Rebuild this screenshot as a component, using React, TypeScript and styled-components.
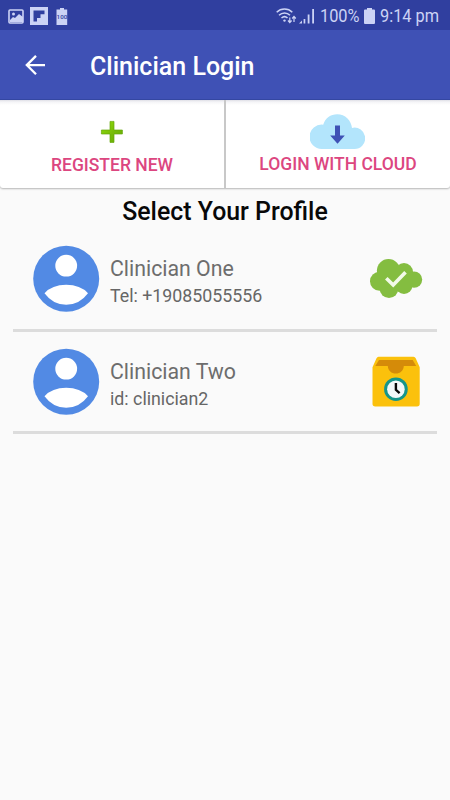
import React from "react";
import styled, { createGlobalStyle } from "styled-components";

const GlobalStyle = createGlobalStyle`
  * { box-sizing: border-box; }
  body { margin: 0; background: #fafafa; font-family: Roboto, "Liberation Sans", sans-serif; }
  svg { display: block; flex: none; }
`;

const Screen = styled.main`
  width: 450px;
  height: 800px;
  overflow: hidden;
  background: #fafafa;
`;

const StatusBar = styled.div`
  height: 30px;
  background: #303f9f;
  display: flex;
  align-items: center;
  justify-content: space-between;
  padding: 2px 10px 0 8px;
  color: #ccd3f5;
`;

const StatusGroup = styled.div`
  display: flex;
  align-items: center;
`;

const LeftIcons = styled(StatusGroup)`
  gap: 6px;
  svg:last-child { margin-left: 2px; }
`;

const RightIcons = styled(StatusGroup)`
  gap: 5px;
  svg:first-child { margin-right: -3px; }
`;

const StatusText = styled.span<{ $width: number }>`
  width: ${(p) => p.$width}px;
  font-size: 19px;
  line-height: 24px;
  white-space: nowrap;
  transform: scaleX(0.86);
  transform-origin: left;
`;

const AppBar = styled.header`
  height: 70px;
  background: #3f51b5;
  border-bottom: 1px solid #3548a4;
  display: flex;
  align-items: center;
  padding: 3px 0 0 25px;
  gap: 44px;
  color: #fff;
`;

const AppTitle = styled.h1`
  margin: 2px 0 0;
  font-size: 25px;
  font-weight: 500;
  line-height: 32px;
  white-space: nowrap;
`;

const Actions = styled.nav`
  height: 87.5px;
  display: grid;
  grid-template-columns: 224px 2px 224px;
  background: #c8c8c8;
  border-radius: 0 0 3px 3px;
  box-shadow: 0 1px 2px rgba(0, 0, 0, 0.28);
`;

const Action = styled.button<{ $top: number; $gap: number; $side: "left" | "right" }>`
  border: 0;
  padding: ${(p) => p.$top}px 0 0;
  display: flex;
  flex-direction: column;
  align-items: center;
  gap: ${(p) => p.$gap}px;
  background: linear-gradient(#dfdfe6 0, #f5f5f7 2px, #fff 5px);
  border-radius: ${(p) => (p.$side === "left" ? "0 0 0 3px" : "0 0 3px 0")};
  font-family: inherit;
  color: #dc4680;
`;

const ActionIcon = styled.span<{ $shift: number }>`
  margin-right: ${(p) => p.$shift}px;
`;

const ActionLabel = styled.span`
  font-size: 17.5px;
  font-weight: 500;
  line-height: 22px;
  white-space: nowrap;
`;

const Heading = styled.h2`
  margin: 8.5px 0 16px;
  text-align: center;
  font-size: 24.9px;
  font-weight: 500;
  line-height: 32px;
  color: #080808;
`;

const ProfileList = styled.ul`
  margin: 0 13px;
  padding: 0;
  list-style: none;
`;

const ProfileItem = styled.li`
  height: 102.5px;
`;

const ProfileRow = styled.div`
  height: 84.5px;
  display: flex;
  align-items: flex-start;
  padding: 1px 14px 0 19px;
`;

const Rule = styled.hr`
  margin: 0;
  border: 0;
  height: 3px;
  background: #dcdcdc;
`;

const Details = styled.div`
  flex: 1;
  padding: 10px 0 0 10px;
  color: #666;
`;

const Name = styled.div`
  font-size: 21.3px;
  line-height: 27px;
  color: #6d6d6d;
`;

const Contact = styled.div`
  padding-top: 1px;
  font-size: 17.8px;
  line-height: 25px;
`;

const PictureIcon = () => (
  <svg width="16" height="15" viewBox="0 0 16 15">
    <rect x="1" y="1" width="14" height="13" rx="1" fill="none" stroke="currentColor" strokeWidth="1.6" />
    <circle cx="5.5" cy="5" r="1.5" fill="currentColor" />
    <path d="M2 11l3-3 2 1 4-4 4 3v5H2z" fill="currentColor" />
  </svg>
);

const FlipIcon = () => (
  <svg width="18" height="18" viewBox="0 0 18 18">
    <path fill="currentColor" fillRule="evenodd" d="M0 0h18v18H0zM3.5 3.5v11H7V11h3.5V7.2h4V3.5z" />
  </svg>
);

const BadgeBatteryIcon = () => (
  <svg width="12" height="17" viewBox="0 0 12 17">
    <path fill="currentColor" d="M4 0h4v1.5h3.2V17H.5V1.5H4z" />
    <text x="5.9" y="11.4" textAnchor="middle" fontSize="6.2" fontFamily="Roboto" fontWeight="500" fill="#303f9f">100</text>
  </svg>
);

const WifiIcon = () => (
  <svg width="21" height="17" viewBox="0 0 21 17" fill="none" stroke="currentColor" strokeWidth="1.5">
    <path d="M.7 4.2C5-.1 12-.1 16.3 4.2M3 7.2c3.2-3.1 7.9-3.1 11 0M5.5 10c1.8-1.6 4.3-1.6 6 0" />
    <circle cx="8.5" cy="12.6" r="1.2" fill="currentColor" stroke="none" />
    <path d="M13.8 9.5v5m-1.8-2l1.8 2 1.8-2M18 14V8.5m-1.8 2l1.8-2 1.8 2" strokeWidth="1.2" />
  </svg>
);

const SignalIcon = () => (
  <svg width="16" height="15" viewBox="0 0 16 15" fill="currentColor">
    <path d="M0 14.5l3-3v3zM4.6 10h1.7v4.5H4.6zM8.7 5.5h1.8v9H8.7zM13.2 0H15v14.5h-1.8z" />
  </svg>
);

const BatteryIcon = () => (
  <svg width="11" height="16" viewBox="0 0 11 16">
    <path fill="currentColor" d="M3 0h5v1.6h2q1 0 1 1V15q0 1-1 1H1q-1 0-1-1V2.6q0-1 1-1h2z" />
  </svg>
);

const BackIcon = () => (
  <svg width="21" height="22" viewBox="0 0 21 22" fill="none" stroke="#fff" strokeWidth="2.3">
    <path d="M11 .9L1.8 10.1 11 19.3M2 10.1h18" />
  </svg>
);

const PlusIcon = () => (
  <svg width="24" height="24" viewBox="0 0 24 24">
    <defs>
      <linearGradient id="plusFill" x1="0" y1="0" x2="1" y2="1">
        <stop offset="0.15" stopColor="#8ad60a" />
        <stop offset="0.55" stopColor="#76bb08" />
        <stop offset="1" stopColor="#66aa07" />
      </linearGradient>
    </defs>
    <path d="M10 1.4h4V10h8.4v4H14v8.4h-4V14H1.4v-4H10z" fill="url(#plusFill)" stroke="#66a80b" strokeWidth=".7" />
  </svg>
);

const CloudDownloadIcon = () => (
  <svg width="55" height="36" viewBox="0 0 55 36">
    <path
      fill="#b3e5fc"
      d="M12 35A12.2 12.2 0 1 1 13.2 10.7C15.2 4.2 20.5.2 27.3.2c7.8 0 14 6.2 14.7 13.7A10.7 10.7 0 1 1 44 35z"
    />
    <path fill="#3f51b5" d="M25 11.5h5v10h4.8l-7.3 8.3-7.3-8.3H25z" />
  </svg>
);

const Avatar = () => (
  <svg width="68" height="68" viewBox="0 0 68 68">
    <circle cx="34.2" cy="33.7" r="33" fill="#528ae4" />
    <circle cx="34.2" cy="20.7" r="10.9" fill="#fff" />
    <path d="M12.5 48.3Q20 39.8 34.2 39.8t21.8 8.5Q47.5 59.8 34.2 59.8t-21.7-11.5z" fill="#fff" />
  </svg>
);

const CloudCheckIcon = () => (
  <svg width="54" height="68" viewBox="0 0 54 68">
    <g fill="#84bd40">
      <circle cx="10.5" cy="36.2" r="9.5" />
      <circle cx="19.5" cy="25.6" r="11.6" />
      <circle cx="35" cy="27" r="9" />
      <circle cx="45" cy="34.6" r="8.2" />
      <circle cx="35" cy="40.5" r="8.4" />
      <circle cx="20" cy="43.5" r="9.4" />
      <path d="M11 28h32v13H11z" />
    </g>
    <path d="M17.3 33.2l6.9 6.8 12.3-12.8" fill="none" stroke="#f2fae8" strokeWidth="3.6" />
  </svg>
);

const ArchiveClockIcon = () => (
  <svg width="54" height="68" viewBox="0 0 54 68">
    <path fill="#fbc10c" d="M9.5 8.7h35q1.5 0 2.2 1.5l4 9v36.6q0 2.7-2.7 2.7H6.2q-2.7 0-2.7-2.7V19.2l4-9q.7-1.5 2-1.5z" />
    <path fill="#d58b09" d="M10 12h33.7l3.5 6H34.8c-.3 4.8-3.7 7.6-8 7.6s-7.7-2.8-8-7.6H6.3z" />
    <circle cx="26.9" cy="41.2" r="11.8" fill="#16958a" />
    <circle cx="26.9" cy="41.2" r="8.8" fill="#f3f8f9" />
    <path d="M26.9 35v6.8l3.7 3.3" fill="none" stroke="#080808" strokeWidth="2.4" />
  </svg>
);

const profiles = [
  { name: "Clinician One", contact: "Tel: +19085055556", Icon: CloudCheckIcon },
  { name: "Clinician Two", contact: "id: clinician2", Icon: ArchiveClockIcon },
];

export default function App() {
  return (
    <>
      <GlobalStyle />
      <Screen>
        <StatusBar>
          <LeftIcons>
            <PictureIcon />
            <FlipIcon />
            <BadgeBatteryIcon />
          </LeftIcons>
          <RightIcons>
            <WifiIcon />
            <SignalIcon />
            <StatusText $width={39.5}>100%</StatusText>
            <BatteryIcon />
            <StatusText $width={60}>9:14 pm</StatusText>
          </RightIcons>
        </StatusBar>
        <AppBar>
          <BackIcon />
          <AppTitle>Clinician Login</AppTitle>
        </AppBar>
        <Actions>
          <Action $side="left" $top={20} $gap={10}>
            <PlusIcon />
            <ActionLabel>REGISTER NEW</ActionLabel>
          </Action>
          <span />
          <Action $side="right" $top={14} $gap={3}>
            <ActionIcon $shift={2}>
              <CloudDownloadIcon />
            </ActionIcon>
            <ActionLabel>LOGIN WITH CLOUD</ActionLabel>
          </Action>
        </Actions>
        <Heading>Select Your Profile</Heading>
        <ProfileList>
          {profiles.map(({ name, contact, Icon }) => (
            <ProfileItem key={name}>
              <ProfileRow>
                <Avatar />
                <Details>
                  <Name>{name}</Name>
                  <Contact>{contact}</Contact>
                </Details>
                <Icon />
              </ProfileRow>
              <Rule />
            </ProfileItem>
          ))}
        </ProfileList>
      </Screen>
    </>
  );
}
